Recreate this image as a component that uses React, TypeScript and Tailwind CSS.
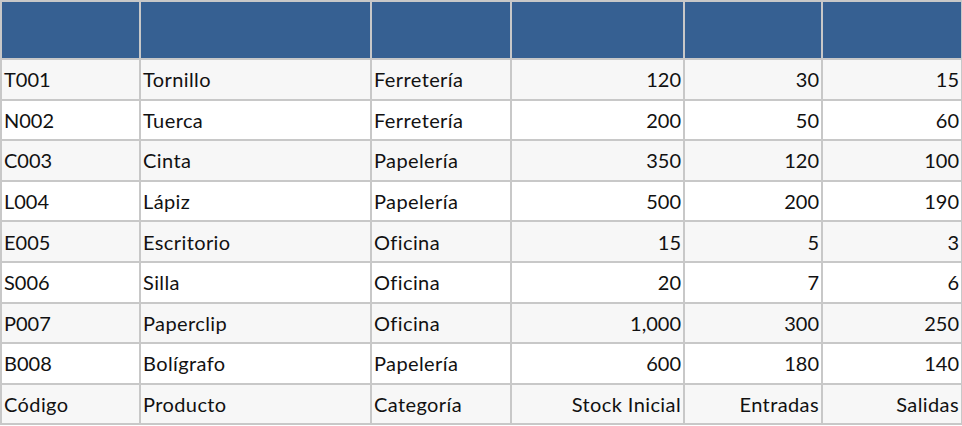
const rows = [
  ['T001', 'Tornillo', 'Ferretería', '120', '30', '15'],
  ['N002', 'Tuerca', 'Ferretería', '200', '50', '60'],
  ['C003', 'Cinta', 'Papelería', '350', '120', '100'],
  ['L004', 'Lápiz', 'Papelería', '500', '200', '190'],
  ['E005', 'Escritorio', 'Oficina', '15', '5', '3'],
  ['S006', 'Silla', 'Oficina', '20', '7', '6'],
  ['P007', 'Paperclip', 'Oficina', '1,000', '300', '250'],
  ['B008', 'Bolígrafo', 'Papelería', '600', '180', '140'],
  ['Código', 'Producto', 'Categoría', 'Stock Inicial', 'Entradas', 'Salidas'],
];

const widths = ['w-[139px]', 'w-[231px]', 'w-[140px]', 'w-[173px]', 'w-[138px]', 'w-[140px]'];

// words come out a bit wider than digits in the sheet
const isWord = (s: string) => /[a-zñáéíóú]{2}/i.test(s);

export default function App() {
  return (
    <div className="bg-white" style={{ fontFamily: 'Lato, "Noto Sans", sans-serif' }}>
      <table className="w-[961px] table-fixed border-collapse text-[20px] text-[#111]">
        <colgroup>
          {widths.map((w, i) => (
            <col key={i} className={w} />
          ))}
        </colgroup>
        <thead>
          <tr className="h-[58px]">
            {widths.map((_, i) => (
              <th key={i} className="border-2 border-[#c8c8c8] bg-[#366092] p-0"></th>
            ))}
          </tr>
        </thead>
        <tbody>
          {rows.map((r, ri) => (
            <tr key={ri} className={`h-[40.6px] ${ri % 2 === 0 ? 'bg-[#f7f7f7]' : 'bg-white'}`}>
              {r.map((c, ci) => (
                <td
                  key={ci}
                  className={`border-2 border-[#c8c8c8] px-[2px] py-0 leading-none whitespace-nowrap ${ci >= 3 ? 'text-right' : 'text-left'} ${isWord(c) ? 'tracking-[0.4px]' : ''}`}
                >
                  {c}
                </td>
              ))}
            </tr>
          ))}
        </tbody>
      </table>
    </div>
  );
}
